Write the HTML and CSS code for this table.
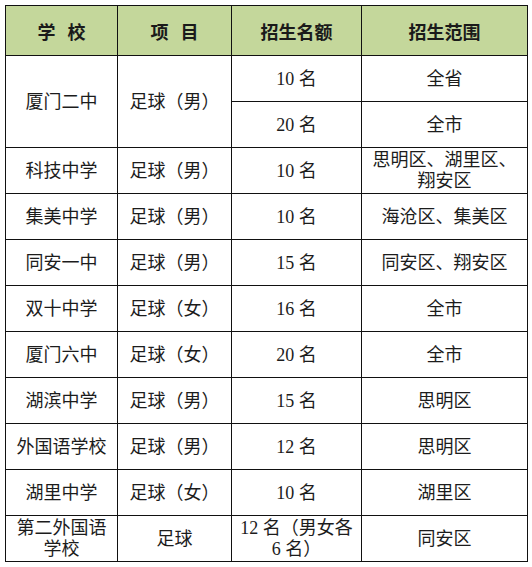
FILE: index.html
```html
<!DOCTYPE html>
<html lang="zh-CN">
<head>
<meta charset="utf-8">
<title>招生表</title>
<link rel="stylesheet" href="styles.css">
</head>
<body>
<table class="grid">
  <colgroup>
    <col class="c1"><col class="c2"><col class="c3"><col class="c4">
  </colgroup>
  <thead>
    <tr class="head">
      <th class="spaced">学 校</th><th class="spaced">项 目</th><th>招生名额</th><th>招生范围</th>
    </tr>
  </thead>
  <tbody>
    <tr><td rowspan="2">厦门二中</td><td rowspan="2">足球（男）</td><td>10 名</td><td>全省</td></tr>
    <tr><td>20 名</td><td>全市</td></tr>
    <tr><td>科技中学</td><td>足球（男）</td><td>10 名</td><td class="tight">思明区、湖里区、<br>翔安区</td></tr>
    <tr><td>集美中学</td><td>足球（男）</td><td>10 名</td><td>海沧区、集美区</td></tr>
    <tr><td>同安一中</td><td>足球（男）</td><td>15 名</td><td>同安区、翔安区</td></tr>
    <tr><td>双十中学</td><td>足球（女）</td><td>16 名</td><td>全市</td></tr>
    <tr><td>厦门六中</td><td>足球（女）</td><td>20 名</td><td>全市</td></tr>
    <tr><td>湖滨中学</td><td>足球（男）</td><td>15 名</td><td>思明区</td></tr>
    <tr><td>外国语学校</td><td>足球（男）</td><td>12 名</td><td>思明区</td></tr>
    <tr><td>湖里中学</td><td>足球（女）</td><td>10 名</td><td>湖里区</td></tr>
    <tr><td class="tight">第二外国语<br>学校</td><td>足球</td><td class="tight">12 名（男女各<br>6 名）</td><td>同安区</td></tr>
  </tbody>
</table>
</body>
</html>
```

FILE: styles.css
```css
html, body {
  margin: 0;
  padding: 0;
  background: #ffffff;
}

body {
  padding: 5px 0 0 5px;
}

.grid {
  border-collapse: collapse;
  table-layout: fixed;
  width: 522px;
  font-family: "Liberation Serif", "Noto Sans CJK SC", serif;
  font-size: 18px;
  color: #1c1c1c;
}

.c1 { width: 112px; }
.c2 { width: 114px; }
.c3 { width: 130px; }
.c4 { width: 166px; }

.grid th,
.grid td {
  border: 1px solid #111111;
  text-align: center;
  vertical-align: middle;
  padding: 0;
  line-height: 22px;
  white-space: nowrap;
}

.head th {
  height: 49px;
  background: #c4d79b;
  font-family: "Noto Sans CJK SC", sans-serif;
  font-weight: bold;
  font-size: 18px;
  color: #1a1a1a;
}

.head th.spaced {
  word-spacing: 8px;
}

.grid td {
  height: 45px;
}

.grid td.tight {
  line-height: 21px;
}
```
